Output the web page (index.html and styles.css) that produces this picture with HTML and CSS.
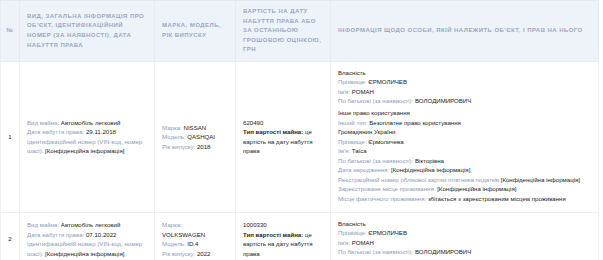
FILE: index.html
```html
<!DOCTYPE html>
<html lang="uk">
<head>
<meta charset="utf-8">
<link rel="stylesheet" href="styles.css">
</head>
<body>
<table class="reg">
  <colgroup>
    <col class="c-num"><col class="c-obj"><col class="c-car"><col class="c-val"><col class="c-own">
  </colgroup>
  <thead>
    <tr>
      <th class="num">№</th>
      <th>Вид, загальна інформація про об'єкт, ідентифікаційний номер (за наявності), дата набуття права</th>
      <th>Марка, модель, рік випуску</th>
      <th>Вартість на дату набуття права або за останньою грошовою оцінкою, грн</th>
      <th>Інформація щодо особи, якій належить об'єкт, і прав на нього</th>
    </tr>
  </thead>
  <tbody>
    <tr>
      <td class="num">1</td>
      <td>
        <div><span class="lb">Вид майна:</span> Автомобіль легковий</div>
        <div><span class="lb">Дата набуття права:</span> 29.11.2018</div>
        <div><span class="lb">Ідентифікаційний номер (VIN-код, номер шасі):</span> [Конфіденційна інформація]</div>
      </td>
      <td>
        <div><span class="lb">Марка:</span> NISSAN</div>
        <div><span class="lb">Модель:</span> QASHQAI</div>
        <div><span class="lb">Рік випуску:</span> 2018</div>
      </td>
      <td>
        <div>620490</div>
        <div><b>Тип вартості майна:</b> це вартість на дату набуття права</div>
      </td>
      <td>
        <div class="blk">
          <div>Власність</div>
          <div><span class="lb">Прізвище:</span> ЄРМОЛИЧЕВ</div>
          <div><span class="lb">Ім'я:</span> РОМАН</div>
          <div><span class="lb">По батькові (за наявності):</span> ВОЛОДИМИРОВИЧ</div>
        </div>
        <div class="blk">
          <div>Інше право користування</div>
          <div><span class="lb">Інший тип:</span> Безоплатне право користування</div>
          <div>Громадянин України</div>
          <div><span class="lb">Прізвище:</span> Єрмоличева</div>
          <div><span class="lb">Ім'я:</span> Таїса</div>
          <div><span class="lb">По батькові (за наявності):</span> Вікторівна</div>
          <div><span class="lb">Дата народження:</span> [Конфіденційна інформація]</div>
          <div><span class="lb">Реєстраційний номер облікової картки платника податків:</span>[Конфіденційна інформація]</div>
          <div><span class="lb">Зареєстроване місце проживання:</span> [Конфіденційна інформація]</div>
          <div><span class="lb">Місце фактичного проживання:</span> збігається з зареєстрованим місцем проживання</div>
        </div>
      </td>
    </tr>
    <tr>
      <td class="num">2</td>
      <td>
        <div><span class="lb">Вид майна:</span> Автомобіль легковий</div>
        <div><span class="lb">Дата набуття права:</span> 07.10.2022</div>
        <div><span class="lb">Ідентифікаційний номер (VIN-код, номер шасі):</span> [Конфіденційна інформація]</div>
      </td>
      <td>
        <div><span class="lb">Марка:</span> VOLKSWAGEN</div>
        <div><span class="lb">Модель:</span> ID.4</div>
        <div><span class="lb">Рік випуску:</span> 2022</div>
      </td>
      <td>
        <div>1000330</div>
        <div><b>Тип вартості майна:</b> це вартість на дату набуття права</div>
      </td>
      <td>
        <div class="blk">
          <div>Власність</div>
          <div><span class="lb">Прізвище:</span> ЄРМОЛИЧЕВ</div>
          <div><span class="lb">Ім'я:</span> РОМАН</div>
          <div><span class="lb">По батькові (за наявності):</span> ВОЛОДИМИРОВИЧ</div>
        </div>
      </td>
    </tr>
  </tbody>
</table>
</body>
</html>
```

FILE: styles.css
```css
html, body {
  margin: 0;
  padding: 0;
  background: #fff;
}
body {
  font-family: "Liberation Sans", Arial, sans-serif;
  color: #222;
}
.reg {
  border-collapse: collapse;
  width: 598px;
  table-layout: fixed;
}
.c-num { width: 19px; }
.c-obj { width: 135px; }
.c-car { width: 81px; }
.c-val { width: 95px; }
.c-own { width: 268px; }

.reg th {
  background: #eef3f9;
  color: #9aa8c2;
  font-size: 6px;
  font-weight: bold;
  text-transform: uppercase;
  letter-spacing: 0.45px;
  line-height: 9.6px;
  text-align: left;
  vertical-align: middle;
  padding: 6px 7px 6px 7px;
  border: 1px solid #e6ebf2;
}
.reg th.num { text-align: center; padding: 6px 2px; }

.reg td {
  font-size: 6.1px;
  line-height: 9.5px;
  vertical-align: middle;
  padding: 6px 9px 6px 7px;
  border: 1px solid #edf0f4;
}
.reg td.num { text-align: center; padding: 6px 2px; }
.lb { color: #8a9bb9; }
.reg b { font-weight: bold; color: #222; }
.blk { margin-bottom: 2.5px; }
```
